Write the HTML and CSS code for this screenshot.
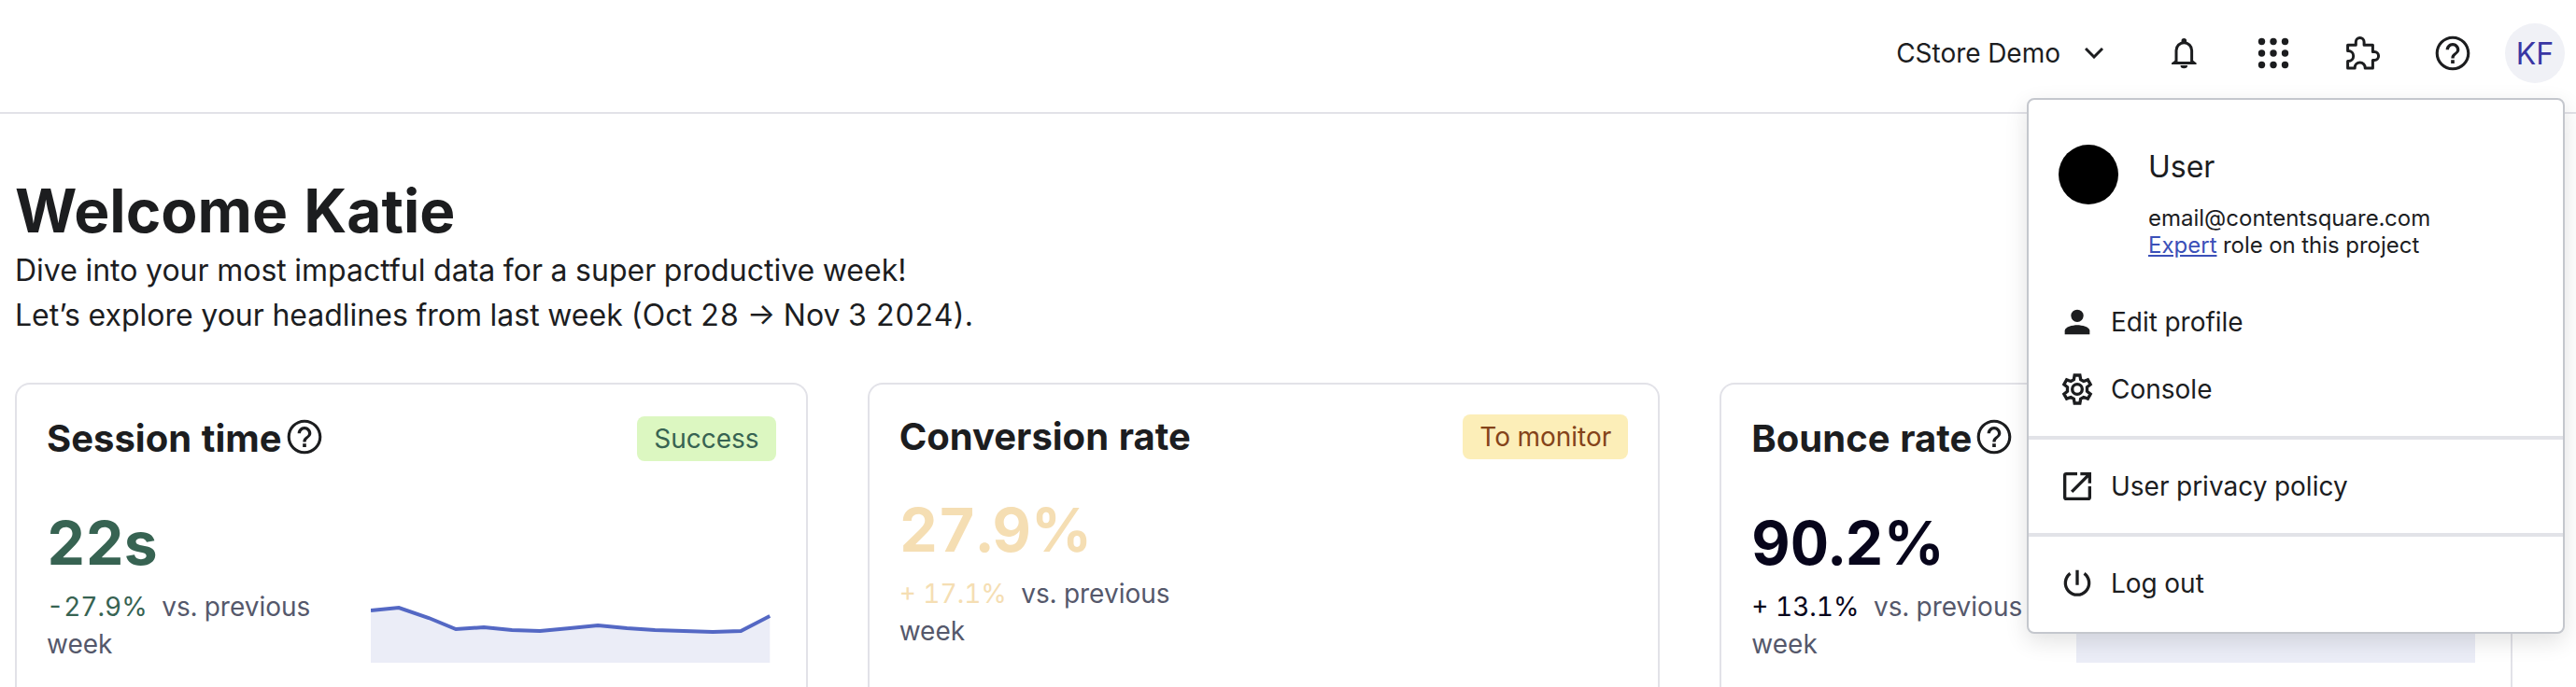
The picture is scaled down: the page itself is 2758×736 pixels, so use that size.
FILE: index.html
```
<!DOCTYPE html>
<html lang="en">
<head>
  <meta charset="UTF-8" />
  <meta name="viewport" content="width=device-width, initial-scale=1.0"/>
  <title>Home</title>
  <link rel="stylesheet" href="styles.css">
</head>
<body>

  <!-- Shared icon shapes -->
  <svg class="sprite" aria-hidden="true">
    <symbol id="icon-help" viewBox="0 0 24 24">
      <path d="M11 18h2v-2h-2v2zm1-16C6.480 2 2 6.480 2 12s4.480 10 10 10 10-4.480 10-10S17.520 2 12 2zm0 18.300c-4.580 0-8.300-3.720-8.300-8.300S7.420 3.700 12 3.700s8.300 3.720 8.300 8.300-3.720 8.300-8.300 8.300zM12 6c-2.210 0-4 1.790-4 4h1.800c0-1.200 1-2.200 2.200-2.200s2.200 1 2.200 2.200c0 2-3.100 1.850-3.100 5h1.800c0-2.250 3.100-2.500 3.100-5 0-2.210-1.790-4-4-4z"/>
    </symbol>
  </svg>

  <header class="topbar">
    <button class="project">
      CStore Demo
      <svg class="chevron" viewBox="0 0 20 12"><path d="M1 1l9 9 9-9"/></svg>
    </button>

    <nav class="tools">
      <button class="tool" aria-label="Notifications">
        <svg viewBox="0 0 48 48">
          <path class="line" d="M16 34V21a8.300 8.300 0 0 1 16.600 0v13"/>
          <path d="M11 34.500l4-3v1.500h18.600v-1.500l4 3V36H11zM20.500 37h7.600a3.800 3.300 0 0 1-7.600 0zM21.500 13v-2.200a2.800 2.800 0 0 1 5.600 0V13z"/>
        </svg>
      </button>
      <button class="tool" aria-label="Apps">
        <svg viewBox="0 0 48 48">
          <circle cx="11.500" cy="11.500" r="3.700"/><circle cx="24" cy="11.500" r="3.700"/><circle cx="36.500" cy="11.500" r="3.700"/>
          <circle cx="11.500" cy="24" r="3.700"/><circle cx="24" cy="24" r="3.700"/><circle cx="36.500" cy="24" r="3.700"/>
          <circle cx="11.500" cy="36.500" r="3.700"/><circle cx="24" cy="36.500" r="3.700"/><circle cx="36.500" cy="36.500" r="3.700"/>
        </svg>
      </button>
      <button class="tool" aria-label="Extensions">
        <svg viewBox="0 0 48 48">
          <path class="line" d="M7.600 15.300h8.700V12a4.400 4.400 0 0 1 8.800 0v3.300h9.300v7.300h1.800a4.400 4.400 0 0 1 0 8.800h-1.800V40h-8.200v-.5a5.500 5.500 0 0 0-11 0v.5H7.600v-7.500h.6a5.500 5.500 0 0 0 0-11h-.6z"/>
        </svg>
      </button>
      <button class="tool" aria-label="Help">
        <svg class="help-large"><use href="#icon-help"/></svg>
      </button>
    </nav>

    <div class="account">
      <button class="avatar" aria-expanded="true" aria-controls="accountMenu">KF</button>

      <div class="menu" id="accountMenu">
        <div class="profile">
          <span class="photo"></span>
          <div class="profile-info">
            <p class="profile-name">User</p>
            <p>email@contentsquare.com</p>
            <p><a href="#role">Expert</a> role on this project</p>
          </div>
        </div>

        <ul class="menu-group">
          <li><a class="menu-item" href="#profile">
            <svg viewBox="0 0 24 24"><circle cx="12" cy="8" r="4"/><path d="M4 20v-2.500c0-2.400 5-3.600 8-3.600s8 1.200 8 3.600V20z"/></svg>
            Edit profile
          </a></li>
          <li><a class="menu-item" href="#console">
            <svg viewBox="0 0 24 24">
              <path class="line" d="M10.300 3h3.400l.5 2.800 1.900 1.100 2.700-1 1.700 3-2.200 1.800v2.600l2.200 1.800-1.700 3-2.700-1-1.900 1.100-.5 2.800h-3.400l-.5-2.800-1.900-1.100-2.700 1-1.700-3 2.200-1.800v-2.600L3.500 8.900l1.700-3 2.700 1 1.900-1.100z"/>
              <circle class="line" cx="12" cy="12" r="3.200"/>
            </svg>
            Console
          </a></li>
        </ul>

        <ul class="menu-group">
          <li><a class="menu-item" href="#privacy">
            <svg viewBox="0 0 24 24">
              <path class="line" d="M12 4H5a1 1 0 0 0-1 1v14a1 1 0 0 0 1 1h14a1 1 0 0 0 1-1v-7M14 4h6v6M20 4L8.500 15.500"/>
            </svg>
            User privacy policy
          </a></li>
        </ul>

        <ul class="menu-group">
          <li><a class="menu-item" href="#logout">
            <svg viewBox="0 0 24 24">
              <path class="line" d="M12 3.500V13M7.500 5.600a7.600 7.600 0 1 0 9 0"/>
            </svg>
            Log out
          </a></li>
        </ul>
      </div>
    </div>
  </header>

  <main>
    <h1>Welcome Katie</h1>
    <p class="intro">Dive into your most impactful data for a super productive week!</p>
    <p class="intro">Let’s explore your headlines from last week (Oct 28 → Nov 3 2024).</p>

    <section class="cards">
      <article class="card success">
        <div class="card-head">
          <h2>Session time</h2>
          <svg class="help"><use href="#icon-help"/></svg>
          <span class="badge">Success</span>
        </div>
        <div class="card-body">
          <div class="metric">
            <p class="value">22s</p>
            <p class="change"><span class="delta">-27.9%</span> vs. previous week</p>
          </div>
          <svg class="chart" viewBox="0 0 427 178" preserveAspectRatio="none">
            <path class="area" d="M0 122L30 119 62 130 91 142 121 140 151 143 181 144 213 141 243 138 274 141 304 143 335 144 366 145 396 144 427 128V178H0z"/>
            <path class="trend" d="M0 122L30 119 62 130 91 142 121 140 151 143 181 144 213 141 243 138 274 141 304 143 335 144 366 145 396 144 427 128"/>
          </svg>
        </div>
      </article>

      <article class="card monitor">
        <div class="card-head">
          <h2>Conversion rate</h2>
          <span class="badge">To monitor</span>
        </div>
        <div class="card-body">
          <div class="metric">
            <p class="value">27.9%</p>
            <p class="change"><span class="delta">+ 17.1%</span> vs. previous week</p>
          </div>
        </div>
      </article>

      <article class="card">
        <div class="card-head">
          <h2>Bounce rate</h2>
          <svg class="help"><use href="#icon-help"/></svg>
        </div>
        <div class="card-body">
          <div class="metric">
            <p class="value">90.2%</p>
            <p class="change"><span class="delta">+ 13.1%</span> vs. previous week</p>
          </div>
          <svg class="chart" viewBox="0 0 427 178" preserveAspectRatio="none">
            <path class="area" d="M0 128H427V178H0z"/>
            <path class="trend" d="M0 128H427"/>
          </svg>
        </div>
      </article>
    </section>
  </main>

</body>
</html>
```
FILE: styles.css
```
* {
  margin: 0;
  padding: 0;
  box-sizing: border-box;
}

body {
  font-family: 'Inter', sans-serif;
  font-size: 28px;
  font-variant-numeric: tabular-nums;
  background: #fff;
  color: #1c1d1f;
  min-height: 100vh;
  display: flex;
  flex-direction: column;
}

button {
  font: inherit;
  color: inherit;
  background: none;
  border: none;
  cursor: pointer;
}

svg {
  display: block;
  flex-shrink: 0;
  fill: #1c1d1f;
}

.sprite {
  position: absolute;
  width: 0;
  height: 0;
}

.line {
  fill: none;
  stroke: #1c1d1f;
}

/* Top bar */
.topbar {
  display: flex;
  justify-content: flex-end;
  align-items: center;
  padding: 25px 12px 31px;
  border-bottom: 2px solid #e2e2e8;
}

.project {
  display: flex;
  align-items: center;
  gap: 26px;
  margin-right: 62px;
}

.chevron {
  width: 20px;
  height: 12px;
  fill: none;
  stroke: #1c1d1f;
  stroke-width: 3;
}

.tools {
  display: flex;
  gap: 48px;
  margin-right: 32px;
}

.tool,
.tool svg {
  width: 48px;
  height: 48px;
}

.tool {
  display: grid;
  place-items: center;
}

.tool .line {
  stroke-width: 3;
  stroke-linejoin: round;
}

.tool .help-large {
  width: 44px;
  height: 44px;
}

.account {
  position: relative;
}

.avatar {
  width: 64px;
  height: 64px;
  border-radius: 50%;
  background: #f0f1f6;
  color: #3a36a3;
  font-size: 32px;
}

/* Account menu */
.menu {
  position: absolute;
  top: 80px;
  right: 0;
  z-index: 10;
  width: 576px;
  padding-bottom: 2px;
  background: #fff;
  border: 2px solid #c4c7cd;
  border-radius: 8px;
  box-shadow: 0 8px 24px rgba(0, 0, 0, 0.12);
}

.profile {
  display: flex;
  gap: 32px;
  padding: 48px 32px 18px;
  font-size: 24px;
  line-height: 29px;
}

.photo {
  width: 64px;
  height: 64px;
  border-radius: 50%;
  background: #000;
}

.profile-name {
  font-size: 32px;
  line-height: 48px;
  margin-bottom: 16px;
}

.profile a {
  color: #3b50b8;
}

.menu-group {
  list-style: none;
  padding: 14px 0;
}

.menu-group + .menu-group {
  border-top: 4px solid #e2e3e8;
}

.menu-item {
  display: flex;
  align-items: center;
  gap: 16px;
  height: 72px;
  padding: 0 32px;
  color: inherit;
  text-decoration: none;
}

.menu-item svg {
  width: 40px;
  height: 40px;
}

.menu-item .line {
  stroke-width: 2;
}

/* Welcome */
main {
  flex: 1;
  display: flex;
  flex-direction: column;
  padding: 64px 68px 0 16px;
}

h1 {
  font-size: 64px;
  line-height: 80px;
}

.intro {
  font-size: 32px;
  line-height: 48px;
}

/* Headline cards */
.cards {
  flex: 1;
  display: grid;
  grid-template-columns: repeat(3, 1fr);
  gap: 64px;
  margin-top: 48px;
}

/* Cards run down to the bottom of the page */
.card {
  padding: 32px 32px 0;
  border: 2px solid #e2e2e8;
  border-bottom: none;
  border-radius: 16px 16px 0 0;
}

.card-head {
  display: flex;
  align-items: center;
}

h2 {
  font-size: 40px;
  line-height: 48px;
}

.help {
  width: 44px;
  height: 52px;
  margin: -2px 0 2px 2px;
}

.badge {
  margin-left: auto;
  padding: 0 18px;
  border-radius: 8px;
  line-height: 48px;
}

.success .badge {
  background: #dcf7c1;
  color: #376352;
}

.monitor .badge {
  background: #fceeb8;
  color: #84431a;
}

.card-body {
  display: flex;
  align-items: center;
  margin-top: 36px;
}

.metric {
  flex: 0 0 44.500%;
  color: #07051b;
}

.value {
  font-size: 64px;
  font-weight: bold;
  line-height: 80px;
  margin-bottom: 8px;
}

.change {
  line-height: 40px;
  color: #55586b;
}

.delta {
  margin-right: 8px;
  color: #07051b;
}

.success .value,
.success .delta {
  color: #376352;
}

.monitor .value,
.monitor .delta {
  color: #f5deb3;
}

.chart {
  flex: 1;
  min-width: 0;
  height: 178px;
  margin: 0 6px 10px 0;
}

.area {
  fill: #ebedf7;
}

.trend {
  fill: none;
  stroke: #5468c4;
  stroke-width: 4;
}
```
